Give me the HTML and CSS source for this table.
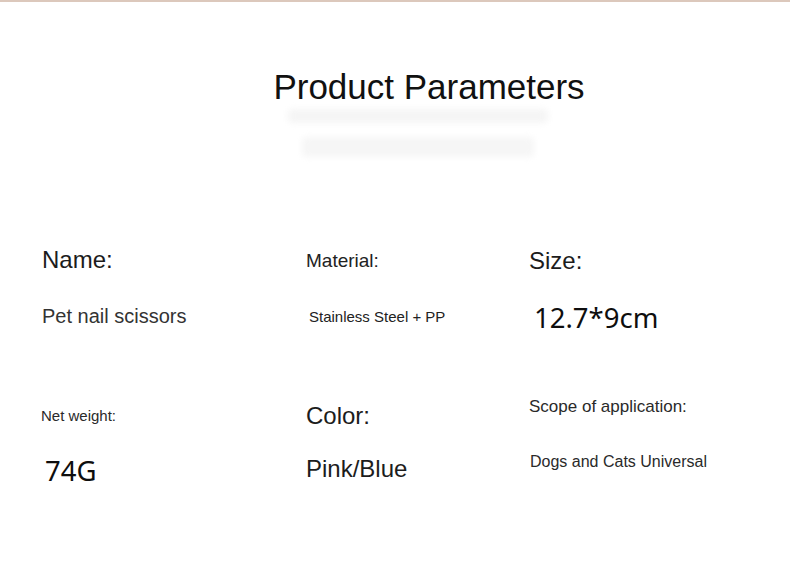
FILE: index.html
```html
<!DOCTYPE html>
<html lang="en">
<head>
<meta charset="utf-8">
<title>Product Parameters</title>
<link rel="stylesheet" href="styles.css">
</head>
<body>
<div class="page">
  <header class="head">
    <h1 class="title">Product Parameters</h1>
    <div class="ghost">
      <span class="ghost-bar ghost-bar-1"></span>
      <span class="ghost-bar ghost-bar-2"></span>
    </div>
  </header>
  <section class="params">
    <div class="cell c-name">
      <div class="label">Name:</div>
      <div class="value">Pet nail scissors</div>
    </div>
    <div class="cell c-material">
      <div class="label">Material:</div>
      <div class="value">Stainless Steel + PP</div>
    </div>
    <div class="cell c-size">
      <div class="label">Size:</div>
      <div class="value">12.7*9cm</div>
    </div>
    <div class="cell c-weight">
      <div class="label">Net weight:</div>
      <div class="value">74G</div>
    </div>
    <div class="cell c-color">
      <div class="label">Color:</div>
      <div class="value">Pink/Blue</div>
    </div>
    <div class="cell c-scope">
      <div class="label">Scope of application:</div>
      <div class="value">Dogs and Cats Universal</div>
    </div>
  </section>
</div>
</body>
</html>
```
FILE: styles.css
```css
* { box-sizing: border-box; }
html, body { margin: 0; padding: 0; background: #fff; }
body {
  font-family: "Liberation Sans", Arial, sans-serif;
  color: #1c1c1c;
  width: 790px;
  height: 563px;
  overflow: hidden;
}
.page {
  border-top: 2px solid #dcc8bc;
  height: 563px;
}
.head {
  height: 238px;
  padding-top: 67px;
  padding-left: 68px;
  display: flex;
  flex-direction: column;
  align-items: center;
}
.title {
  margin: 0;
  font-weight: normal;
  font-size: 35px;
  line-height: 1;
  color: #111;
}
.ghost {
  display: flex;
  flex-direction: column;
  align-items: center;
  gap: 14px;
  margin-top: 5px;
  margin-left: -22px;
}
.ghost-bar {
  display: block;
  background: #f5f5f5;
  filter: blur(3px);
  border-radius: 4px;
}
.ghost-bar-1 { width: 260px; height: 14px; }
.ghost-bar-2 { width: 232px; height: 20px; background: #f6f6f6; }

.params {
  display: grid;
  grid-template-columns: 264px 223px 1fr;
  grid-template-rows: 150px 1fr;
  padding-left: 42px;
}
.cell { display: flex; flex-direction: column; align-items: flex-start; }
.label, .value { line-height: 1; white-space: nowrap; }

.c-name .label { font-size: 24px; margin-top: 8px; }
.c-name .value { font-size: 20px; margin-top: 34px; color: #333; }

.c-material .label { font-size: 19px; margin-top: 10.5px; color: #222; }
.c-material .value { font-size: 15px; margin-top: 39.5px; margin-left: 3px; color: #222; }

.c-size .label { font-size: 24px; margin-top: 9px; }
.c-size .value {
  font-family: "Noto Sans", "Open Sans", sans-serif;
  font-size: 27.5px;
  margin-top: 30.5px;
  margin-left: 5px;
  color: #0e0e0e;
}

.c-weight .label { font-size: 15px; margin-top: 18px; margin-left: -1px; color: #2a2a2a; }
.c-weight .value {
  font-family: "Noto Sans", "Open Sans", sans-serif;
  font-size: 27.5px;
  margin-top: 34px;
  margin-left: 3px;
  color: #0e0e0e;
}

.c-color .label { font-size: 24px; margin-top: 13.5px; }
.c-color .value { font-size: 24px; margin-top: 29px; }

.c-scope .label { font-size: 17px; margin-top: 8px; color: #2a2a2a; }
.c-scope .value { font-size: 16px; margin-top: 39px; margin-left: 1px; color: #2a2a2a; }
```
